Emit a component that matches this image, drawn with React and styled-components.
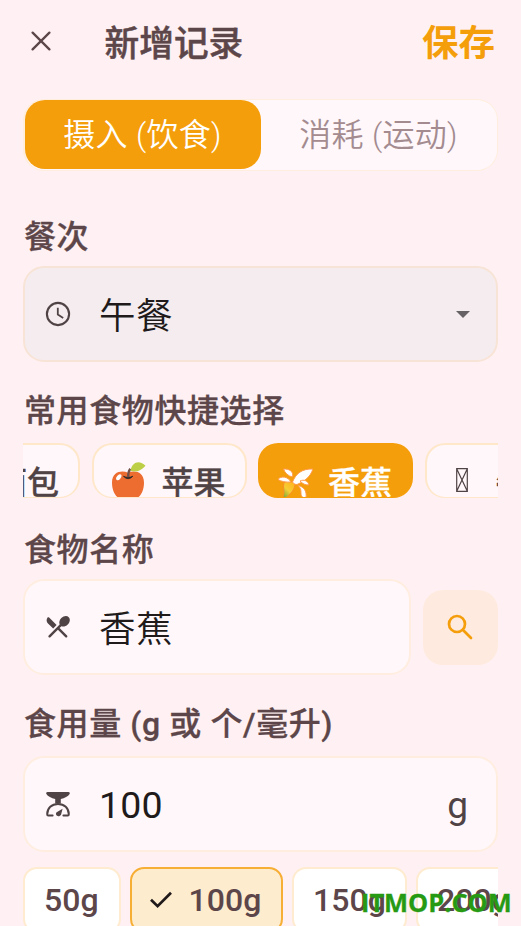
import React from 'react';
import styled, { createGlobalStyle, css } from 'styled-components';

const GlobalStyle = createGlobalStyle`
  * {
    box-sizing: border-box;
  }

  body {
    margin: 0;
    background-color: #fff1f3;
    font-family: Roboto, 'Noto Sans CJK SC', sans-serif;
    overflow: hidden;
  }
`;

const Screen = styled.main`
  position: relative;
  width: 521px;
  height: 926px;
  padding: 0 23px;
  display: flex;
  flex-direction: column;
  overflow: hidden;
  background-color: #fff1f3;
`;

/**
 * App bar
 */
const AppBar = styled.header`
  height: 84px;
  flex-shrink: 0;
  display: flex;
  align-items: center;
`;

const CloseButton = styled.button`
  width: 36px;
  height: 36px;
  padding: 0 1px 3px 0;
  border: 0;
  background: none;
  display: flex;
  align-items: center;
  justify-content: center;
  color: #5c464a;
`;

const Title = styled.h1`
  margin: 0 0 0 45.5px;
  padding-top: 4px;
  flex: 1;
  font-size: 34.7px;
  font-weight: 500;
  line-height: 42px;
  -webkit-text-stroke: 0.5px currentColor;
  color: #5c464a;
`;

const SaveButton = styled.button`
  padding: 4px 3px 0 0;
  border: 0;
  background: none;
  font-family: inherit;
  font-size: 36.5px;
  font-weight: 700;
  line-height: 42px;
  color: #f59e0b;
`;

/**
 * Intake / burn switch
 */
const Segments = styled.div`
  height: 72px;
  margin-top: 15px;
  flex-shrink: 0;
  display: flex;
  padding: 0 0 1px;
  border: 1px solid #ffeedd;
  border-width: 1px 1px 1px 2px;
  border-radius: 21px;
  background-color: #fff7fa;
`;

const Segment = styled.div`
  flex: 1;
  display: flex;
  align-items: center;
  justify-content: center;
  padding: 0 1px 5px 0;
  border-radius: 20px;
  font-size: 32px;
  font-weight: 350;
  letter-spacing: 0.3px;
  color: ${props => (props.$active ? '#fff' : '#a38b90')};
  background-color: ${props => (props.$active ? '#f59e0b' : 'transparent')};
`;

const Label = styled.h2`
  margin: ${props => props.$top}px 0 0 1px;
  height: 40px;
  flex-shrink: 0;
  font-size: 32px;
  font-weight: 500;
  line-height: 42px;
  letter-spacing: 0.6px;
  white-space: nowrap;
  -webkit-text-stroke: 0.3px currentColor;
  color: #5c464a;
`;

/**
 * Input fields
 */
const Field = styled.div`
  height: 96px;
  margin-top: ${props => props.$top || 0}px;
  flex: ${props => (props.$grow ? '1' : 'none')};
  display: flex;
  align-items: center;
  padding: 0 21px 0 18px;
  border: 2px solid ${props => (props.$filled ? '#f8e4d6' : '#ffeee0')};
  border-radius: 21px;
  background-color: ${props => (props.$filled ? '#f5ecef' : '#fff7fa')};
  color: #504345;
`;

const FieldIcon = styled.span`
  width: 30px;
  height: 30px;
  display: flex;
  align-items: center;
  justify-content: center;
`;

const FieldValue = styled.span`
  flex: 1;
  margin-left: 26px;
  padding-top: ${props => (props.$number ? 2 : 6)}px;
  font-size: ${props => (props.$number ? 37.5 : 36.5)}px;
  font-weight: ${props => (props.$number ? 400 : 350)};
  line-height: 50px;
  letter-spacing: ${props => (props.$number ? 0.2 : 0.6)}px;
  color: #201a1b;
`;

const FieldSuffix = styled.span`
  padding: 4px 7px 0 0;
  font-size: 37px;
  line-height: 50px;
`;

const Arrow = styled.span`
  margin-right: 5px;
  border: 7px solid transparent;
  border-top-color: #666164;
  border-bottom: 0;
`;

const FieldRow = styled.div`
  display: flex;
  align-items: center;
  gap: 12px;
  margin-top: 10px;
`;

const SearchButton = styled.button`
  width: 75px;
  height: 75px;
  padding: 0 2px 1px 0;
  border: 0;
  border-radius: 20px;
  display: flex;
  align-items: center;
  justify-content: center;
  background-color: #ffeadf;
  color: #f59e0b;
`;

/**
 * Horizontally scrolled chip rows
 */
const ChipRow = styled.div`
  display: flex;
  flex-shrink: 0;
  gap: ${props => props.$gap}px;
  margin-top: ${props => props.$top}px;
  overflow: hidden;
`;

const FoodChip = styled.div`
  width: 155px;
  height: 55px;
  flex-shrink: 0;
  display: flex;
  align-items: flex-start;
  padding: 17px 0 0 17px;
  overflow: hidden;
  border: 2px solid #ffe7ca;
  border-bottom-width: 1px;
  border-radius: 20px;
  background-color: #fff7fa;
  color: #504345;
  font-size: 32px;
  font-weight: 500;
  line-height: 42px;
  white-space: nowrap;
  -webkit-text-stroke: 0.3px currentColor;

  svg {
    flex-shrink: 0;
    margin-right: 15px;
  }

  ${props =>
    props.$selected &&
    css`
      border-color: #f59e0b;
      background-color: #f59e0b;
      color: #fff;
    `}

  ${props =>
    props.$scrolled &&
    css`
      margin-left: -98px;
      padding-left: 68px;
    `}
`;

const AmountChip = styled.div`
  width: ${props => props.$width}px;
  height: 66px;
  flex-shrink: 0;
  display: flex;
  align-items: center;
  gap: 17px;
  padding: 0 0 1px 19px;
  border: 2px solid ${props => (props.$selected ? '#f7ae35' : '#ffebcf')};
  border-radius: 14px;
  background-color: ${props => (props.$selected ? '#fdecce' : '#fff')};
  color: #5c464a;
  font-size: 32px;
  font-weight: 500;
  letter-spacing: 0.1px;
  white-space: nowrap;

  svg {
    margin-left: -1px;
  }
`;

const Missing = styled.span`
  width: 12px;
  height: 24px;
  margin: 6px 28px 0 12px;
  flex-shrink: 0;

  svg {
    display: block;
  }
`;

const Watermark = styled.div`
  position: absolute;
  left: 361px;
  top: 885px;
  font-family: 'Open Sans', sans-serif;
  font-size: 25.4px;
  font-weight: 700;
  line-height: 34px;
  -webkit-text-stroke: 0.3px currentColor;
  color: #279a13;
`;

const CloseIcon = () => (
  <svg width="20" height="20" viewBox="0 0 20 20" fill="none" stroke="currentColor" strokeWidth="2.3" strokeLinecap="round">
    <path d="M1.6 1.6 18.4 18.4M18.4 1.6 1.6 18.4" />
  </svg>
);

const ClockIcon = () => (
  <svg width="26" height="26" viewBox="0 0 26 26" fill="none" stroke="currentColor" strokeWidth="2.1">
    <circle cx="13" cy="13" r="11.1" />
    <path d="M12.8 6.7v6.9l5.4 3.3" strokeWidth="1.8" />
  </svg>
);

const MenuIcon = () => (
  <svg width="29" height="29" viewBox="0.5 0.6 24 24" fill="currentColor">
    <path d="m8.1 13.34 2.83-2.83-6.19-6.18c-.41-.41-1.1-.36-1.42.12-1 1.49-.84 3.53.48 4.86l4.3 4.03zm6.78-1.81c1.53.71 3.68.21 5.27-1.38 1.91-1.91 2.28-4.65.81-6.12-1.46-1.46-4.2-1.1-6.12.81-1.59 1.59-2.09 3.74-1.38 5.27L4.4 19.17c-.39.39-.39 1.02 0 1.41s1.02.39 1.41 0L12 14.41l6.18 6.18c.39.39 1.02.39 1.41 0s.39-1.02 0-1.41L13.41 13l1.47-1.47z" />
  </svg>
);

const ScaleIcon = () => (
  <svg width="26" height="26" viewBox="0 0 26 26">
    <path d="M2.5 1h21c1.2 0 1.7 1 1.1 2-1.4 2.5-5 4.2-8.8 4.9v4.6h-5.6V7.9C6.4 7.2 2.8 5.5 1.4 3 .8 2 1.3 1 2.5 1z" fill="currentColor" />
    <path d="M7.600 24.500H3.200c-.7 0-1-.5-1-1.300 0-6 4.500-10.300 10.800-10.300s10.800 4.300 10.800 10.300c0 .8-.3 1.300-1 1.300h-4.400" fill="none" stroke="currentColor" strokeWidth="2" strokeLinecap="round" />
    <path d="m17.600 17.800-1.500 5.600c-.9 2.100-3.800 2.500-4.800.7-.8-1.500-.1-2.600 1.200-3.300z" fill="currentColor" />
  </svg>
);

const SearchIcon = () => (
  <svg width="26" height="26" viewBox="0 0 26 26" fill="none" stroke="currentColor" strokeWidth="2.7">
    <circle cx="10" cy="10" r="8" />
    <path d="m16 16 8 8" strokeLinecap="round" />
  </svg>
);

const CheckIcon = () => (
  <svg width="22" height="18" viewBox="0 0 22 18" fill="none" stroke="#201a1b" strokeWidth="2.7">
    <path d="m1 8.800 6.600 6.400L21 1.800" />
  </svg>
);

const AppleIcon = () => (
  <svg width="36" height="40" viewBox="0 0.800 36 40">
    <path d="M17 11.500C23 9 33 10 33 21.500 33 31 28 38 22 38H12C6 38 1 31 1 21.500 1 10 11 9 17 11.500z" fill="#ed6c30" />
    <path d="M12.500 15c2.700 3.300 6.800 3.200 9.300 0-2.700 1.500-6.500 1.600-9.300 0z" fill="#2b2b2b" stroke="#2b2b2b" strokeWidth=".8" />
    <path d="M17.300 16c-.4-4 .3-6.200 2-8.500" fill="none" stroke="#705047" strokeWidth="2.300" />
    <path d="M19.500 9.500C21 0 29-1.500 34.500 4.500 30 9.500 25 11.500 19.500 9.500z" fill="#bdcf46" />
    <ellipse cx="7.800" cy="16" rx="2" ry="3.400" transform="rotate(38 7.800 16)" fill="#fff" />
  </svg>
);

const BananaIcon = () => (
  <svg width="36" height="40" viewBox="0 0.500 36 40">
    <defs>
      <linearGradient id="peel" x1=".7" y1="0" x2="0" y2="1">
        <stop offset="0" stopColor="#ffb51d" />
        <stop offset=".5" stopColor="#f6cd35" />
        <stop offset="1" stopColor="#6fab39" />
      </linearGradient>
    </defs>
    <path d="M7 21c3-2 9-1 11 1 0 6-4 10-9 14-3 1-3-1-2-4 0-4-1-6 0-11z" fill="url(#peel)" stroke="#f78d2c" strokeWidth="1" />
    <path d="M15.500 20.500C19 12 25 7 36 7.500 33 16 27 20 20 23c-2 0-4-1-4.500-2.500z" fill="#fff" stroke="#ff9a4a" strokeWidth="1" />
    <path d="M15.500 15.500C11 14.500 8 11.500 6.500 7.500 12 7 17 10 15.500 15.500z" fill="#fff" stroke="#ff9a4a" strokeWidth="1" />
    <path d="M14 20.500C9 21 4 20 1 18c3-4 10-3 13 2.500z" fill="#fff" stroke="#ff9a4a" strokeWidth="1" />
    <path d="M23 19.500c4-2 8 0 9 4-4 0-6-1-9-4z" fill="#fff" stroke="#ff9a4a" strokeWidth="1" />
    <path d="M21 24c6 1 9 6 8 12-3 1-5-1-5-4s0-5-3-8z" fill="#fff" stroke="#ff9a4a" strokeWidth="1" />
  </svg>
);

const App = () => (
  <>
    <GlobalStyle />
    <Screen>
      <AppBar>
        <CloseButton aria-label="关闭">
          <CloseIcon />
        </CloseButton>
        <Title>新增记录</Title>
        <SaveButton>保存</SaveButton>
      </AppBar>

      <Segments>
        <Segment $active>摄入 (饮食)</Segment>
        <Segment>消耗 (运动)</Segment>
      </Segments>

      <Label $top={45}>餐次</Label>
      <Field $filled $top={10}>
        <FieldIcon>
          <ClockIcon />
        </FieldIcon>
        <FieldValue>午餐</FieldValue>
        <Arrow />
      </Field>

      <Label $top={28}>常用食物快捷选择</Label>
      <ChipRow $gap={11.5} $top={13}>
        <FoodChip $scrolled>面包</FoodChip>
        <FoodChip>
          <AppleIcon />
          苹果
        </FoodChip>
        <FoodChip $selected>
          <BananaIcon />
          香蕉
        </FoodChip>
        <FoodChip>
          <Missing>
            <svg width="12" height="24" viewBox="0 0 12 24" fill="none" stroke="#504345" strokeWidth="1.2">
              <path d="M.7.7h10.600v22.600H.7zL11.300 23.300M11.300.7.7 23.300" />
            </svg>
          </Missing>
          牛奶
        </FoodChip>
      </ChipRow>

      <Label $top={31}>食物名称</Label>
      <FieldRow>
        <Field $grow>
          <FieldIcon>
            <MenuIcon />
          </FieldIcon>
          <FieldValue>香蕉</FieldValue>
        </Field>
        <SearchButton aria-label="搜索">
          <SearchIcon />
        </SearchButton>
      </FieldRow>

      <Label $top={28}>食用量 (g 或 个/毫升)</Label>
      <Field $top={13}>
        <FieldIcon>
          <ScaleIcon />
        </FieldIcon>
        <FieldValue $number>100</FieldValue>
        <FieldSuffix>g</FieldSuffix>
      </Field>

      <ChipRow $gap={9} $top={15}>
        <AmountChip $width={97.5}>50g</AmountChip>
        <AmountChip $width={153.5} $selected>
          <CheckIcon />
          100g
        </AmountChip>
        <AmountChip $width={115}>150g</AmountChip>
        <AmountChip $width={115}>200g</AmountChip>
      </ChipRow>

      <Watermark>ITMOP.COM</Watermark>
    </Screen>
  </>
);

export default App;
